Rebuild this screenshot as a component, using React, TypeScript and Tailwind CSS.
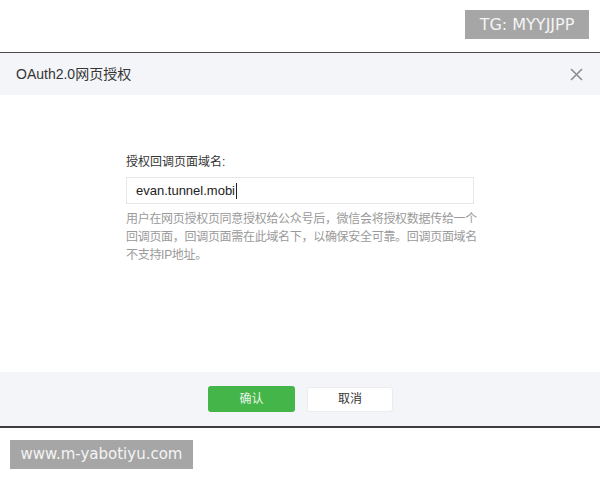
import React from 'react';

const cjk = { fontFamily: '"Liberation Sans", "Noto Sans CJK SC", sans-serif' };
const mark = { fontFamily: '"DejaVu Sans", sans-serif' };

const CloseIcon = () => (
  <svg width="13" height="13" viewBox="0 0 13 13" fill="none" stroke="#8d8d8d" strokeWidth="1.6">
    <path d="M1 1 L12 12 M12 1 L1 12" />
  </svg>
);

const App = () => {
  return (
    <div className="w-[600px] h-[480px] bg-white overflow-hidden" style={cjk}>
      <div className="h-[52px] flex justify-end items-start pt-[10px] pr-[11px]">
        <div
          className="h-[29px] w-[124px] bg-[#a6a6a6] text-[#f4f4f4] text-[16px] flex items-center justify-center"
          style={mark}
        >
          TG: MYYJJPP
        </div>
      </div>

      <div className="border-t border-[#4b4b4b]">
        <div className="h-[42px] bg-[#f4f5f9] flex items-center justify-between pl-[16px] pr-[17px]">
          <span className="text-[14px] text-[#353535]">OAuth2.0网页授权</span>
          <CloseIcon />
        </div>

        <div className="h-[277px] bg-white pl-[126px] pt-[58px]">
          <div className="text-[12px] leading-[18px] text-[#353535]">授权回调页面域名:</div>
          <div className="mt-[6px] w-[348px] h-[27px] border border-[#e7e7eb] flex items-center pl-[9px]">
            <span className="text-[13px] text-[#222]">evan.tunnel.mobi</span>
            <span className="w-px h-[16px] bg-[#222] ml-px" />
          </div>
          <p className="mt-[6px] w-[360px] text-[12px] leading-[18px] tracking-[-0.3px] text-[#9a9a9a] whitespace-nowrap">
            用户在网页授权页同意授权给公众号后，微信会将授权数据传给一个
            <br />
            回调页面，回调页面需在此域名下，以确保安全可靠。回调页面域名
            <br />
            不支持IP地址。
          </p>
        </div>

        <div className="h-[54px] bg-[#f4f5f9] flex items-center justify-center gap-[12px] pl-[1px]">
          <button className="w-[87px] h-[26px] rounded-[3px] bg-[#44b549] text-[12px] text-[#e8f6e9]">
            确认
          </button>
          <button className="w-[86px] h-[25px] rounded-[3px] bg-white border border-[#ececec] text-[12px] text-[#353535]">
            取消
          </button>
        </div>
      </div>

      <div className="border-t-2 border-[#3d3d3d] pt-[12px] pl-[10px]">
        <div
          className="h-[29px] w-[183px] bg-[#a6a6a6] text-[#f4f4f4] text-[15px] flex items-center justify-center"
          style={mark}
        >
          www.m-yabotiyu.com
        </div>
      </div>
    </div>
  );
};

export default App;
